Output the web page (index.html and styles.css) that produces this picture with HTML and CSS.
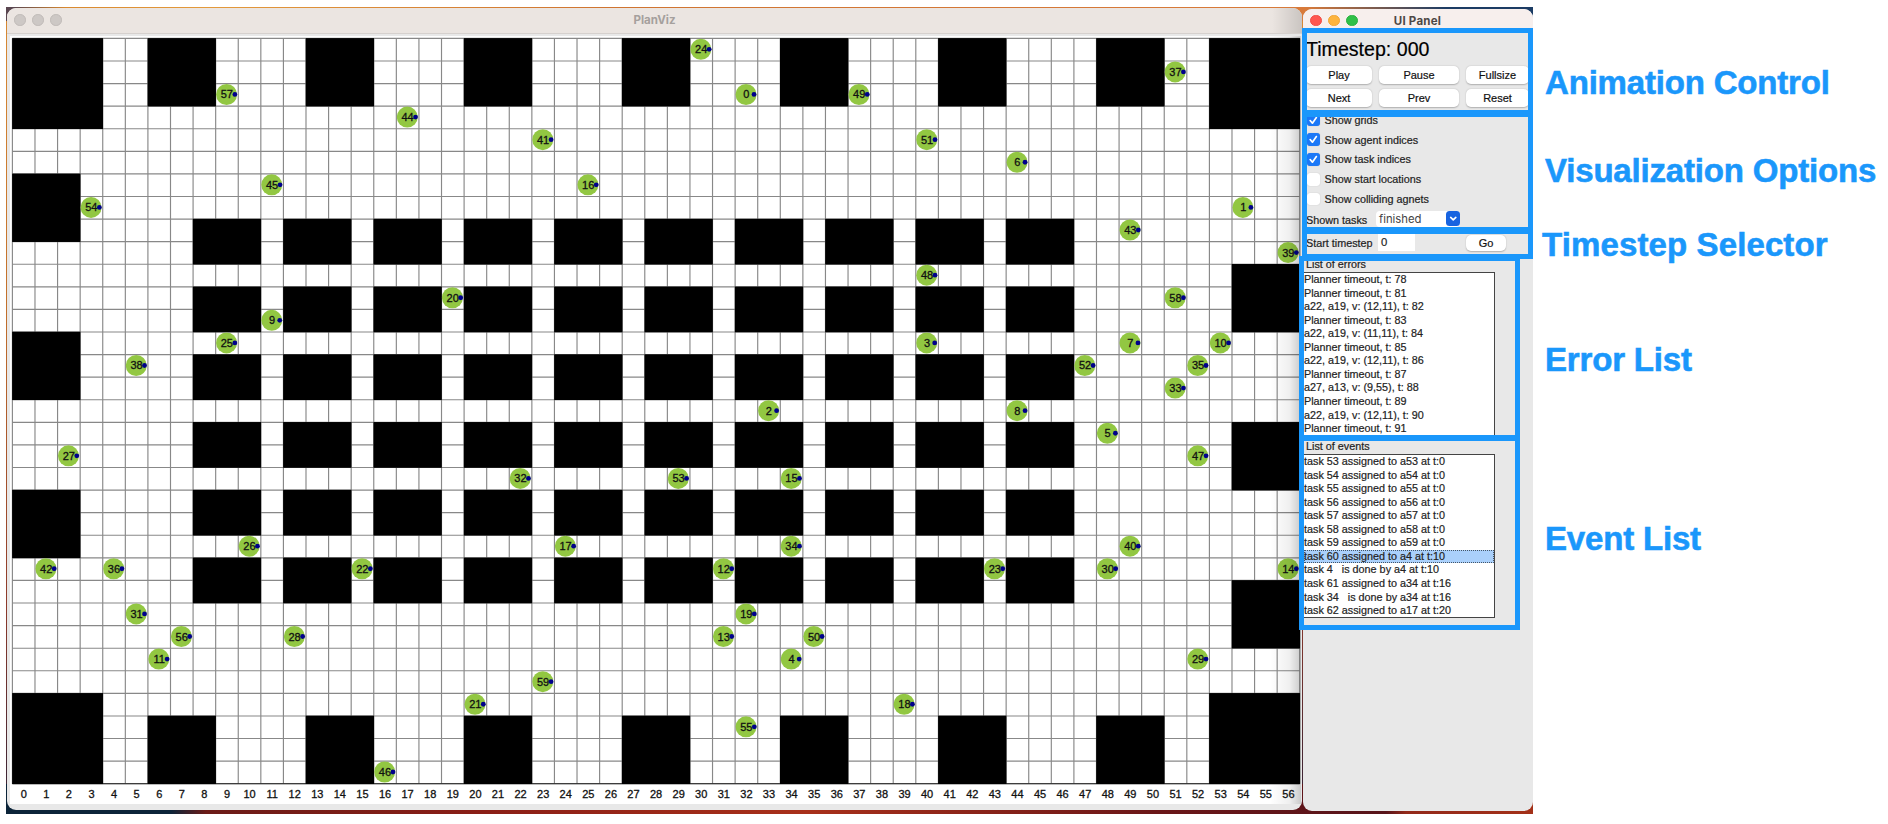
FILE: index.html
```html
<!DOCTYPE html>
<html lang="en">
<head>
<meta charset="utf-8">
<title>PlanViz</title>
<link rel="stylesheet" href="styles.css">
</head>
<body>
<main class="page">
  <div class="desktop">
    <section class="window viewer">
      <header class="titlebar inactive">
        <span class="lights"><i></i><i></i><i></i></span>
        <h1 class="title">PlanViz</h1>
      </header>
      <div class="canvas-frame">
        <svg class="map" id="map" width="1291" height="768" viewBox="10 36 1291 768"></svg>
      </div>
    </section>
    <section class="window panel">
      <header class="titlebar">
        <span class="lights"><i class="red"></i><i class="yellow"></i><i class="green"></i></span>
        <h2 class="title">UI Panel</h2>
      </header>
      <div class="timestep">Timestep: 000</div>
      <div class="buttons">
        <button>Play</button><button>Pause</button><button>Fullsize</button>
        <button>Next</button><button>Prev</button><button>Reset</button>
      </div>
      <div class="options">
        <div class="option"><span class="box on"><svg viewBox="0 0 12 12"><path d="M3 6.3 5.2 8.8 9 3.4"/></svg></span>Show grids</div>
        <div class="option"><span class="box on"><svg viewBox="0 0 12 12"><path d="M3 6.3 5.2 8.8 9 3.4"/></svg></span>Show agent indices</div>
        <div class="option"><span class="box on"><svg viewBox="0 0 12 12"><path d="M3 6.3 5.2 8.8 9 3.4"/></svg></span>Show task indices</div>
        <div class="option"><span class="box"></span>Show start locations</div>
        <div class="option"><span class="box"></span>Show colliding agnets</div>
      </div>
      <div class="field tasks">
        <span class="field-name">Shown tasks</span>
        <span class="combo">finished<span class="arrow"><svg viewBox="0 0 14 14"><path d="M4.5 6 7 8.4 9.5 6"/></svg></span></span>
      </div>
      <div class="field start">
        <span class="field-name">Start timestep</span>
        <span class="entry">0</span>
        <button class="go">Go</button>
      </div>
      <h3 class="list-title">List of errors</h3>
      <ul class="list errors">
        <li>Planner timeout, t: 78</li>
        <li>Planner timeout, t: 81</li>
        <li>a22, a19, v: (12,11), t: 82</li>
        <li>Planner timeout, t: 83</li>
        <li>a22, a19, v: (11,11), t: 84</li>
        <li>Planner timeout, t: 85</li>
        <li>a22, a19, v: (12,11), t: 86</li>
        <li>Planner timeout, t: 87</li>
        <li>a27, a13, v: (9,55), t: 88</li>
        <li>Planner timeout, t: 89</li>
        <li>a22, a19, v: (12,11), t: 90</li>
        <li>Planner timeout, t: 91</li>
      </ul>
      <h3 class="list-title">List of events</h3>
      <ul class="list events">
        <li>task 53 assigned to a53 at t:0</li>
        <li>task 54 assigned to a54 at t:0</li>
        <li>task 55 assigned to a55 at t:0</li>
        <li>task 56 assigned to a56 at t:0</li>
        <li>task 57 assigned to a57 at t:0</li>
        <li>task 58 assigned to a58 at t:0</li>
        <li>task 59 assigned to a59 at t:0</li>
        <li class="selected">task 60 assigned to a4 at t:10</li>
        <li>task 4   is done by a4 at t:10</li>
        <li>task 61 assigned to a34 at t:16</li>
        <li>task 34   is done by a34 at t:16</li>
        <li>task 62 assigned to a17 at t:20</li>
      </ul>
    </section>
  </div>
  <aside class="labels">
    <p class="label animation">Animation Control</p>
    <p class="label visualization">Visualization Options</p>
    <p class="label selector">Timestep Selector</p>
    <p class="label error">Error List</p>
    <p class="label event">Event List</p>
  </aside>
  <div class="mark mark-animation"></div>
  <div class="mark mark-options"></div>
  <div class="mark mark-selector"></div>
  <div class="mark mark-errors"></div>
  <div class="mark mark-events"></div>
</main>
<script src="map.js"></script>
</body>
</html>
```
FILE: styles.css
```css
* { box-sizing: border-box; }
body { margin: 0; background: #fff; font-family: "Liberation Sans", Arial, sans-serif; }
h1, h2, h3, p, ul { margin: 0; padding: 0; font-weight: normal; }
.page { position: relative; width: 1888px; height: 824px; overflow: hidden; display: flex; align-items: flex-start; }

.desktop {
  display: flex; align-items: flex-start; gap: 1px;
  width: 1527px; height: 807px; margin: 7px 0 0 6px; padding: 1px 0 0 1px; flex: none;
  background:
    linear-gradient(90deg, #0c2439 0, #0c2439 165px, #6b1b17 200px, #8a1e16 480px, #a8301a 800px, #6a1618 1150px, #57141a 1380px, #92291a 1400px, #a33018 1527px) bottom / 100% 30px no-repeat,
    linear-gradient(90deg, #5a4650 0, #5a4650 8px, #d9892f 60px, #e39a3c 200px, #cf7431 600px, #d87a3a 1300px, #1c3c64 1440px, #1c3c64 1527px) top / 100% 14px no-repeat,
    linear-gradient(#d88a34 0, #c2702c 300px, #8c3a2c 600px, #3b2434 780px);
}
.window { display: flex; flex-direction: column; overflow: hidden; background: #e8e8e8; border-radius: 9px; flex: none; }
.titlebar { display: flex; align-items: center; flex: none; background: #f7efed; }
.lights { display: flex; gap: 6.5px; width: 60px; }
.lights i { width: 11.5px; height: 11.5px; border-radius: 50%; background: #cdc8c5; border: 1px solid #bfbab7; }
.lights .red { background: #ff5750; border-color: #f04c45; }
.lights .yellow { background: #fdb43e; border-color: #efa536; }
.lights .green { background: #2fc048; border-color: #2bb041; }
.title { flex: 1; text-align: center; font-family: Inter, sans-serif; font-weight: 700; font-size: 11.5px; color: #4d4846; }

.viewer { width: 1295px; height: 802px; }
.viewer .titlebar { height: 26px; padding: 0 67px 1px 7px; background: linear-gradient(90deg, transparent 1265px, rgba(0,0,0,.14)), #ebe5e1; border-bottom: 1px solid #d6d1ce; }
.viewer .title { color: #a5a09d; font-size: 11.5px; }
.canvas-frame { padding: 2px 0 0 3px; display: flex; }
.map { display: block; background: #fff; }
.map .grid { stroke: #888; stroke-width: 1.15; }
.map .agent { fill: #92c742; }
.map .heading { fill: #00008b; }
.map text { font-size: 11px; text-anchor: middle; fill: #111; stroke: #111; stroke-width: .3; }

.panel { width: 230px; height: 802px; margin-top: 1px; padding-left: 4px; color: #222; -webkit-text-stroke: .2px currentColor; }
.panel .titlebar { height: 23px; margin-left: -4px; padding: 0 57px 0 7px; -webkit-text-stroke: 0; }
.panel .lights { width: 49px; }
.panel .title { letter-spacing: .25px; }
.timestep { font-size: 19.6px; line-height: 24px; margin: 5px 0 0 -1px; height: 29px; white-space: nowrap; color: #000; }
button { border: 0; padding: 0; background: #fff; border-radius: 5px; box-shadow: 0 .5px 1.5px rgba(0,0,0,.25); font: 11px "Liberation Sans", Arial, sans-serif; color: #111; -webkit-text-stroke: .2px currentColor; }
.buttons { display: grid; grid-template-columns: 66px 80px 63px; grid-auto-rows: 18px; gap: 5px 7px; margin-left: -1px; }
.options { display: flex; flex-direction: column; margin: 3px 0 0 -1px; }
.option { display: flex; align-items: center; gap: 5px; height: 19.8px; padding-left: 1px; font-size: 10.8px; }
.box { width: 12.5px; height: 12.5px; border-radius: 3px; background: #fff; box-shadow: 0 0 1px rgba(0,0,0,.25); }
.box.on { background: #1b78f7; }
.box svg, .arrow svg { display: block; width: 100%; height: 100%; fill: none; stroke: #fff; stroke-width: 1.6; stroke-linecap: round; stroke-linejoin: round; }
.field { display: flex; align-items: center; font-size: 10.8px; margin-left: -1px; }
.field-name { width: 70px; flex: none; white-space: nowrap; }
.tasks { height: 17px; margin-top: 1.5px; }
.tasks .field-name { padding-top: 2px; }
.combo { display: flex; align-items: center; justify-content: space-between; width: 84px; height: 16px; padding-left: 3px; background: #fff; border-radius: 4px; font: 11.3px Inter, sans-serif; color: #444; -webkit-text-stroke: 0; }
.arrow { width: 14.5px; height: 15px; border-radius: 3.5px; background: #1763e0; }
.start { height: 18px; margin-top: 6.5px; }
.entry { width: 37px; height: 17px; line-height: 16px; padding-left: 3px; background: #fff; margin: 0 51px 0 2px; font-size: 11.3px; }
.go { width: 40px; height: 16.5px; }
.list-title { font-size: 10.8px; line-height: 14px; flex: none; margin-left: -1px; }
.start + .list-title { margin-top: 5px; }
.list { width: 192px; margin: 1px 0 0 -4px; background: #fff; border: 1px solid #444; list-style: none; font-size: 10.8px; flex: none; }
.list li { height: 13.57px; line-height: 13.57px; white-space: pre; }
.errors { height: 167px; overflow: hidden; }
.events { height: 164.5px; }
.list .selected { background: #aad0fb; outline: 1px dotted #456; outline-offset: -1px; }

.labels { display: flex; flex-direction: column; padding: 63.6px 0 0 12px; }
.label { font-size: 33px; line-height: 38px; font-weight: 700; color: #1a97fb; white-space: nowrap; letter-spacing: -.18px; -webkit-text-stroke: .6px currentColor; }
.visualization { margin-top: 50px; }
.selector { margin: 36px 0 0 -3px; letter-spacing: .12px; }
.error { margin-top: 77px; }
.event { margin-top: 141px; }

/* Highlight frames lie over the control window. */
.mark { position: absolute; border: 5px solid #1a97fb; }
.mark-animation { left: 1302px; top: 28px; width: 231px; height: 87px; }
.mark-options { left: 1302px; top: 112px; width: 231px; height: 120px; }
.mark-selector { left: 1302px; top: 229px; width: 231px; height: 30px; }
.mark-errors { left: 1299px; top: 256px; width: 221px; height: 184px; }
.mark-events { left: 1299px; top: 436px; width: 221px; height: 194px; }
```
FILE: map.js
```js
const CELL = 22.585, X0 = 12.4, Y0 = 38.4, COLS = 57, ROWS = 33;
const edge = [6, 13, 20, 27, 34, 41, 48];
const blocks = [[0, 0, 4, 4], [53, 0, 4, 4], [0, 29, 4, 4], [53, 29, 4, 4]];
edge.forEach(c => blocks.push([c, 0, 3, 3], [c, 30, 3, 3]));
[6, 13, 20].forEach(r => blocks.push([0, r, 3, 3]));
[10, 17, 24].forEach(r => blocks.push([54, r, 3, 3]));
for (let c = 8; c <= 44; c += 4)
  for (let r = 8; r <= 23; r += 3) blocks.push([c, r, 3, 2]);

// Column and row of each agent, by agent index.
const agents = [
  [32,2],[54,7],[33,16],[40,13],[34,27],[48,17],[44,5],[49,13],[44,16],[11,12],
  [53,13],[6,27],[31,23],[31,26],[56,23],[34,19],[25,6],[24,22],[39,29],[32,25],
  [19,11],[20,29],[15,23],[43,23],[30,0],[9,13],[10,22],[2,18],[12,26],[52,27],
  [48,23],[5,25],[22,19],[51,15],[34,22],[52,14],[4,23],[51,1],[5,14],[56,9],
  [49,22],[23,4],[1,23],[49,8],[17,3],[11,6],[16,32],[52,18],[40,10],[37,2],
  [35,26],[40,4],[47,14],[29,19],[3,7],[32,30],[7,26],[9,2],[51,11],[23,28]
];

const px = c => (X0 + c * CELL).toFixed(2);
const py = r => (Y0 + r * CELL).toFixed(2);
let out = '<defs><linearGradient id="shade"><stop offset="0" stop-color="#000" stop-opacity="0"/><stop offset=".6" stop-color="#000" stop-opacity=".06"/><stop offset="1" stop-color="#000" stop-opacity=".22"/></linearGradient></defs>';
for (let c = 0; c <= COLS; c++) out += `<line class="grid" x1="${px(c)}" y1="${py(0)}" x2="${px(c)}" y2="${py(ROWS)}"/>`;
for (let r = 0; r <= ROWS; r++) out += `<line class="grid" x1="${px(0)}" y1="${py(r)}" x2="${px(COLS)}" y2="${py(r)}"/>`;
out += `<line x1="${px(0)}" y1="${py(ROWS)}" x2="${px(COLS)}" y2="${py(ROWS)}" stroke="#222"/>`;
blocks.forEach(([c, r, w, h]) => {
  out += `<rect x="${px(c) - .3}" y="${py(r) - .3}" width="${w * CELL + .6}" height="${h * CELL + .6}"/>`;
});
agents.forEach(([c, r], i) => {
  const x = X0 + c * CELL + 10.9, y = Y0 + r * CELL + 10.9;
  const dot = i < 10 ? 8 : 8.3;
  out += `<circle class="agent" cx="${x}" cy="${y}" r="10.5"/><text x="${x + .3}" y="${y + 4}">${i}</text><circle class="heading" cx="${x + dot}" cy="${y}" r="2.4"/>`;
});
for (let c = 0; c < COLS; c++) out += `<text x="${X0 + (c + .5) * CELL}" y="798.4">${c}</text>`;
out += '<rect x="1270" y="36" width="32" height="768" fill="url(#shade)"/>';
document.getElementById('map').innerHTML = out;
```
